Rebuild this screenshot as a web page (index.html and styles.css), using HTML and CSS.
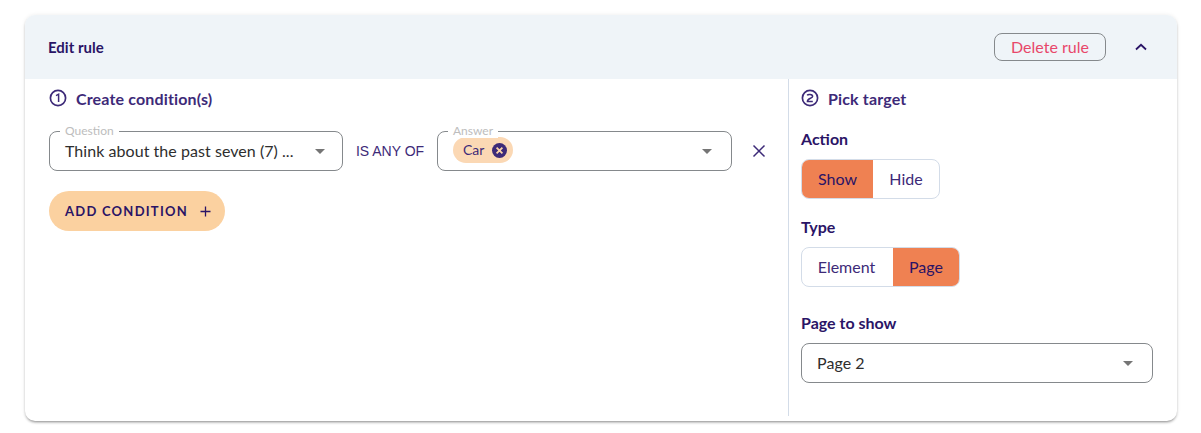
FILE: index.html
```html
<!DOCTYPE html>
<html lang="en">
<head>
    <meta charset="UTF-8" />
    <title>Edit rule</title>
    <link rel="stylesheet" href="styles.css">
</head>
<body>
<div class="card">
    <div class="card-header">
        <span class="card-title">Edit rule</span>
        <button class="delete-btn">Delete rule</button>
        <svg class="collapse-icon" width="12" height="8" viewBox="0 0 12 8"><path d="M1 6.5 L6 1.8 L11 6.5" fill="none" stroke="#2a1466" stroke-width="1.8"/></svg>
    </div>

    <div class="card-body">
        <!-- Conditions -->
        <div class="conditions">
            <h3 class="step-title">
                <svg width="18" height="18" viewBox="0 0 18 18"><circle cx="9" cy="9" r="7.6" fill="none" stroke="#3d2a78" stroke-width="1.7"/><path d="M7 6.6 L9.6 5.2 V13" fill="none" stroke="#3d2a78" stroke-width="1.5"/></svg>
                Create condition(s)
            </h3>

            <div class="condition-row">
                <div class="field question">
                    <span class="field-label">Question</span>
                    <span class="field-value">Think about the past seven (7) ...</span>
                    <span class="caret"></span>
                </div>
                <span class="operator">IS ANY OF</span>
                <div class="field answer">
                    <span class="field-label">Answer</span>
                    <span class="chip">
                        Car
                        <svg width="15" height="15" viewBox="0 0 15 15"><circle cx="7.5" cy="7.5" r="7.5" fill="#3d2a78"/><path d="M4.6 4.6 L10.4 10.4 M10.4 4.6 L4.6 10.4" stroke="#fbd3a9" stroke-width="1.8"/></svg>
                    </span>
                    <span class="caret"></span>
                </div>
                <svg class="remove-icon" width="14" height="14" viewBox="0 0 14 14"><path d="M1.5 1.5 L12.5 12.5 M12.5 1.5 L1.5 12.5" stroke="#3d2a78" stroke-width="1.5"/></svg>
            </div>

            <button class="add-btn">
                ADD CONDITION
                <svg width="11" height="11" viewBox="0 0 11 11"><path d="M5.5 0.5 V10.5 M0.5 5.5 H10.5" stroke="#2a1466" stroke-width="1.3"/></svg>
            </button>
        </div>

        <!-- Target -->
        <div class="target">
            <h3 class="step-title">
                <svg width="18" height="18" viewBox="0 0 18 18"><circle cx="9" cy="9" r="7.6" fill="none" stroke="#3d2a78" stroke-width="1.7"/><path d="M6.2 6.4 C6.8 5 11.6 5 11.6 7.4 C11.6 9.4 6.4 9.2 6.4 12.4 H11.8" fill="none" stroke="#3d2a78" stroke-width="1.5"/></svg>
                Pick target
            </h3>

            <div class="group-label action-label">Action</div>
            <div class="toggle">
                <span class="toggle-item active show-item">Show</span>
                <span class="toggle-item hide-item">Hide</span>
            </div>

            <div class="group-label type-label">Type</div>
            <div class="toggle">
                <span class="toggle-item element-item">Element</span>
                <span class="toggle-item active page-item">Page</span>
            </div>

            <div class="group-label page-label">Page to show</div>
            <div class="field page-select">
                <span class="field-value">Page 2</span>
                <span class="caret"></span>
            </div>
        </div>
    </div>
</div>
</body>
</html>
```

FILE: styles.css
```css
body {
    font-family: Lato, 'Open Sans', sans-serif;
    background: #ffffff;
    margin: 0;
    padding: 15px 24px 12px 25px;
}

.card {
    width: 1152px;
    height: 406px;
    background: #ffffff;
    border-radius: 10px;
    box-shadow: 0 2px 3px -1px rgba(0, 0, 0, 0.45), 0 0 4px rgba(0, 0, 0, 0.08);
    overflow: hidden;
}

.card-header {
    height: 64px;
    display: flex;
    align-items: center;
    padding: 0 30px 0 23px;
    background: #eff4f8;
}

.card-title {
    flex: 1;
    font-size: 15px;
    font-weight: 700;
    color: #2a1466;
}

.delete-btn {
    width: 112px;
    height: 28px;
    margin-right: 29px;
    padding: 0 0 2px;
    font-family: inherit;
    font-size: 16px;
    color: #e8476a;
    background: transparent;
    border: 1px solid #85898c;
    border-radius: 8px;
}

.card-body {
    display: flex;
    height: 337px;
}

.conditions {
    width: 764px;
    padding: 9px 0 0 24px;
    box-sizing: border-box;
    border-right: 1px solid #d3dce8;
}

.step-title {
    display: flex;
    align-items: center;
    gap: 9px;
    margin: 0;
    height: 20px;
    font-size: 16px;
    font-weight: 700;
    letter-spacing: 0.15px;
    color: #3d2a78;
}

.condition-row {
    display: flex;
    align-items: center;
    margin-top: 23px;
}

.field {
    position: relative;
    display: flex;
    align-items: center;
    height: 40px;
    box-sizing: border-box;
    padding: 0 19px 2px 15px;
    border: 1px solid #85898c;
    border-radius: 8px;
    background: #ffffff;
    font-size: 16px;
    color: #2e2e2e;
}

.question {
    width: 294px;
    padding-right: 17px;
}

.answer {
    width: 295px;
}

.field-label {
    position: absolute;
    top: -8px;
    left: 10px;
    padding: 0 5px;
    background: #ffffff;
    font-size: 12px;
    line-height: 14px;
    color: #bdbdbd;
}

.field-value {
    flex: 1;
    letter-spacing: 0.05px;
}

.caret {
    width: 0;
    height: 0;
    margin-top: 2px;
    border-left: 5px solid transparent;
    border-right: 5px solid transparent;
    border-top: 5px solid #757575;
}

.operator {
    width: 94px;
    text-align: center;
    font-family: 'Liberation Sans', Arial, sans-serif;
    font-size: 14px;
    color: #3d2a78;
}

.chip {
    display: flex;
    align-items: center;
    gap: 8px;
    height: 26px;
    padding: 0 6px 1px 10px;
    box-sizing: border-box;
    margin-right: auto;
    border-radius: 13px;
    background: #fbd8b4;
    font-size: 14px;
    color: #3d2a78;
}

.chip svg {
    margin-top: 1px;
}

.remove-icon {
    margin-left: 20px;
}

.add-btn {
    display: flex;
    align-items: center;
    gap: 12px;
    width: 176px;
    height: 40px;
    margin-top: 20px;
    padding: 0 0 0 16px;
    border: none;
    border-radius: 20px;
    background: #fbd1a0;
    font-family: inherit;
    font-size: 13px;
    font-weight: 700;
    letter-spacing: 1.25px;
    color: #2a1466;
}

.target {
    flex: 1;
    padding: 9px 0 0 12px;
}

.group-label {
    font-size: 16px;
    line-height: 20px;
    font-weight: 700;
    color: #2a1466;
}

.action-label {
    margin-top: 21px;
    margin-bottom: 10px;
}

.type-label {
    margin-top: 18px;
    margin-bottom: 10px;
}

.page-label {
    margin-top: 26px;
    margin-bottom: 10px;
}

.toggle {
    display: inline-flex;
    height: 40px;
    box-sizing: border-box;
    border: 1px solid #d3dce8;
    border-radius: 8px;
    overflow: hidden;
    vertical-align: top;
}

.toggle-item {
    display: flex;
    align-items: center;
    justify-content: center;
    padding-bottom: 2px;
    box-sizing: border-box;
    font-size: 16px;
    color: #3d2a78;
}

.toggle-item.active {
    background: #ef8152;
    color: #2a1466;
}

.show-item { width: 71px; }
.hide-item { width: 66px; }
.element-item { width: 91px; padding-right: 2px; }
.page-item { width: 66px; }

.page-select {
    width: 352px;
}
```
